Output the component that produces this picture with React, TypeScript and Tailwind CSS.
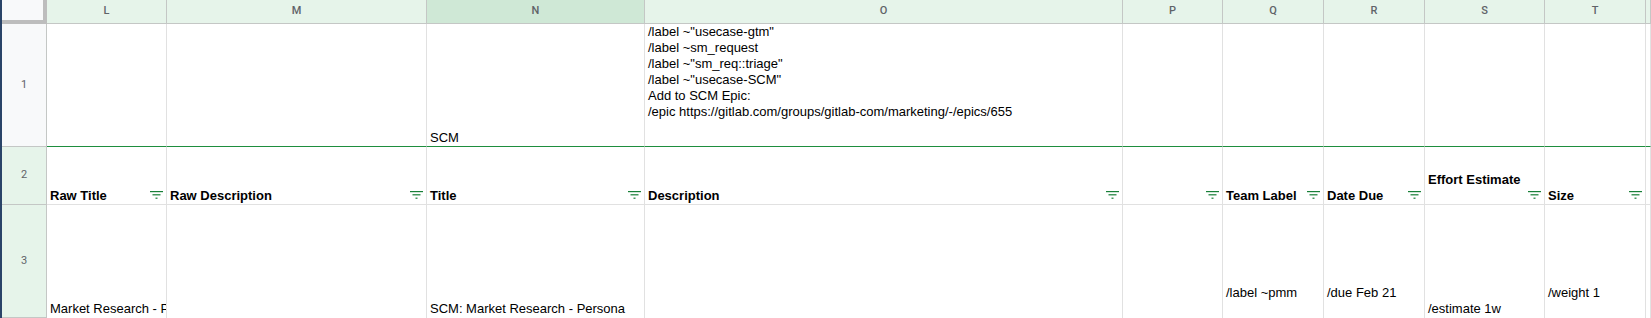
import type { ReactNode } from 'react'

type CellSpec = {
  lines?: string[]
  valign?: 'top' | 'bottom'
  bold?: boolean
  filter?: boolean
}

// L..U, U is just the sliver at the right edge
const COLUMNS = ['L', 'M', 'N', 'O', 'P', 'Q', 'R', 'S', 'T', '']
const SELECTED_COLUMN = 'N'

const ROW_ONE: CellSpec[] = [
  {},
  {},
  { lines: ['SCM'] },
  {
    valign: 'top',
    lines: [
      '/label ~"usecase-gtm"',
      '/label ~sm_request',
      '/label ~"sm_req::triage"',
      '/label ~"usecase-SCM"',
      'Add to SCM Epic:',
      '/epic https://gitlab.com/groups/gitlab-com/marketing/-/epics/655',
    ],
  },
  {},
  {},
  {},
  {},
  {},
  {},
]

const ROW_TWO: CellSpec[] = [
  { bold: true, filter: true, lines: ['Raw Title'] },
  { bold: true, filter: true, lines: ['Raw Description'] },
  { bold: true, filter: true, lines: ['Title'] },
  { bold: true, filter: true, lines: ['Description'] },
  { bold: true, filter: true, lines: [''] },
  { bold: true, filter: true, lines: ['Team Label'] },
  { bold: true, filter: true, lines: ['Date Due'] },
  { bold: true, filter: true, lines: ['Effort Estimate', ''] },
  { bold: true, filter: true, lines: ['Size'] },
  {},
]

const ROW_THREE: CellSpec[] = [
  { lines: ['Market Research - Persona'] },
  {},
  { lines: ['SCM: Market Research - Persona'] },
  {},
  {},
  { lines: ['/label ~pmm', ''] },
  { lines: ['/due Feb 21', ''] },
  { lines: ['/estimate 1w'] },
  { lines: ['/weight 1', ''] },
  {},
]

function FilterIcon() {
  return (
    <svg
      width="13"
      height="8"
      viewBox="0 0 13 8"
      fill="currentColor"
      className="mb-[5px] mr-[3px] shrink-0 text-[#188038]"
    >
      <rect x="0" y="0" width="13" height="1.2" />
      <rect x="2.5" y="3.2" width="8" height="1.2" />
      <rect x="5.5" y="6.6" width="2" height="1.2" />
    </svg>
  )
}

function DataCell({ cell, lineClass }: { cell: CellSpec; lineClass: string }) {
  const lines = cell.lines ?? []
  return (
    <div
      className={`flex min-w-0 overflow-hidden border-r bg-white ${lineClass} ${
        cell.valign === 'top' ? 'items-start' : 'items-end'
      }`}
    >
      <div
        className={`min-w-0 flex-1 overflow-hidden pl-[3px] text-[13px] leading-[16px] text-black ${
          cell.bold ? 'font-bold' : ''
        }`}
      >
        {lines.map((line, i) => (
          <div key={i} className="h-[16px] whitespace-pre">
            {line || '\u00a0'}
          </div>
        ))}
      </div>
      {cell.filter && <FilterIcon />}
    </div>
  )
}

function RowHeader({ children, selected }: { children: ReactNode; selected?: boolean }) {
  return (
    <div
      className={`flex items-center justify-center border-b border-r border-[#c4c7c5] font-['Roboto',sans-serif] text-[11px] text-[#5f6368] ${
        selected ? 'bg-[#e6f4ea]' : 'bg-[#f8f9fa]'
      }`}
    >
      {children}
    </div>
  )
}

export default function App() {
  return (
    <div className="flex h-[318px] w-[1651px] overflow-hidden bg-white font-['Liberation_Sans',Arial,sans-serif]">
      <div className="w-[2px] shrink-0 bg-[#2a4468]" />
      <div className="grid flex-1 grid-cols-[45px_120px_260px_218px_478px_100px_101px_101px_120px_101px_1fr] grid-rows-[24px_123px_58px_113px]">
        {/* column headers */}
        <div className="border-b-4 border-r-4 border-[#bdbdbd] bg-[#f8f9fa]" />
        {COLUMNS.map((col, i) => (
          <div
            key={i}
            className={`flex items-center justify-center border-b border-r border-[#c4c7c5] font-['Roboto',sans-serif] text-[11px] font-medium text-[#5f6368] ${
              col === SELECTED_COLUMN ? 'bg-[#cfe8d6]' : 'bg-[#e6f4ea]'
            }`}
          >
            {col}
          </div>
        ))}

        {/* row 1 */}
        <RowHeader>1</RowHeader>
        {ROW_ONE.map((cell, i) => (
          <DataCell key={i} cell={cell} lineClass="border-r-[#e1e1e1] border-b border-b-[#1e8e3e]" />
        ))}

        {/* row 2 */}
        <RowHeader selected>2</RowHeader>
        {ROW_TWO.map((cell, i) => (
          <DataCell key={i} cell={cell} lineClass="border-r-[#e1e1e1] border-b border-b-[#e1e1e1]" />
        ))}

        {/* row 3 runs past the bottom of the window */}
        <RowHeader selected>3</RowHeader>
        {ROW_THREE.map((cell, i) => (
          <DataCell key={i} cell={cell} lineClass="border-r-[#e1e1e1] pb-[1px]" />
        ))}
      </div>
    </div>
  )
}
